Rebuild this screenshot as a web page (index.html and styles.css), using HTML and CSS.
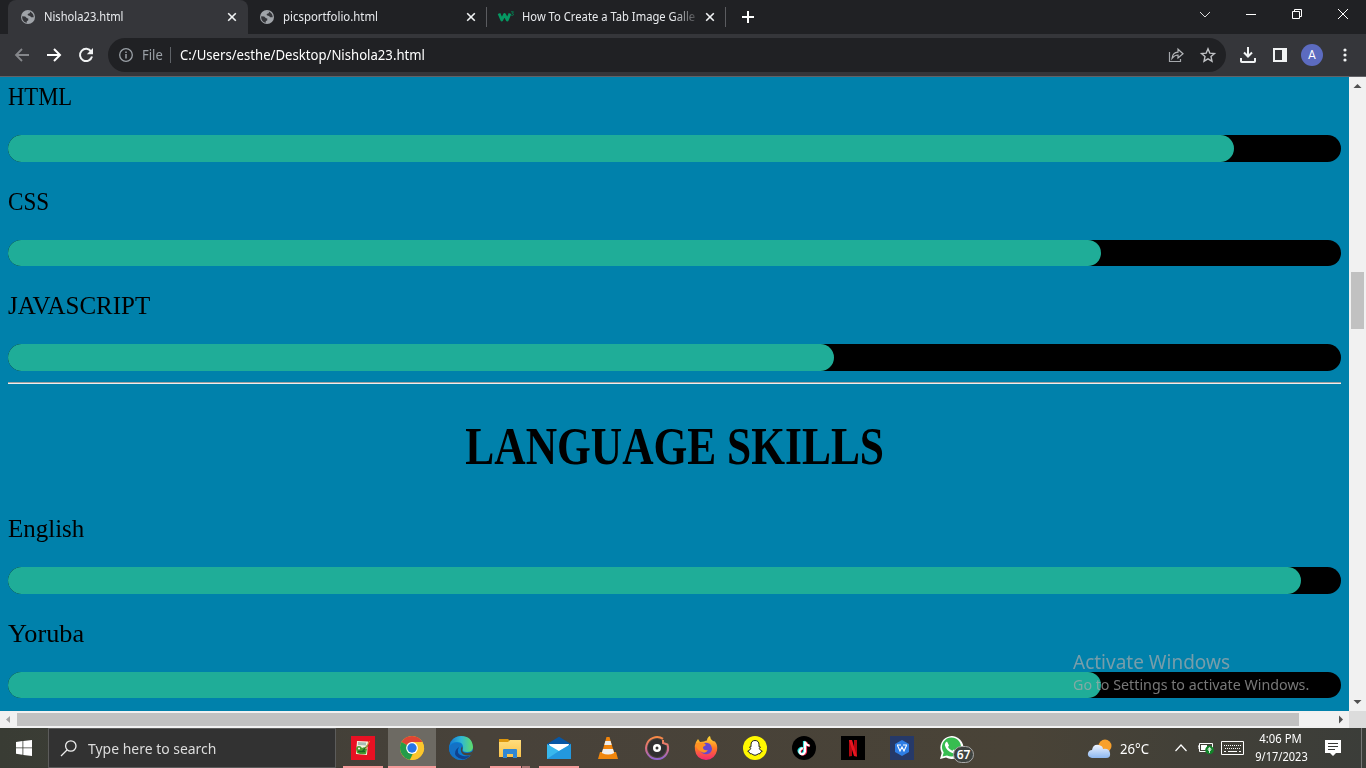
FILE: index.html
```html
<!DOCTYPE html>
<html lang="en">
<head>
<meta charset="utf-8">
<title>Nishola23.html</title>
<link rel="stylesheet" href="styles.css">
</head>
<body>
<svg width="0" height="0" class="defs">
  <defs>
    <symbol id="globe" viewBox="0 0 14 14"><circle cx="7" cy="7" r="7" fill="#a0a4a9"/><path d="M1.200 6.200 4.200 6.600 6 8.300 7.300 8.600 7.200 10.400 5.800 11v1.700C2.700 12.300.8 9.500 1.200 6.200ZM6.500 1.300 9.300 1.600 8.600 3.300 6.700 4 6.800 5.300 9 5.900 10.200 7.300 12.700 7.200c.2-3-2.700-6.400-6.200-5.900Z" fill="#35363a"/></symbol>
    <symbol id="close" viewBox="0 0 10 10"><path d="M1.200 1.200 8.800 8.800M8.800 1.200 1.200 8.800" stroke="#f1f3f4" stroke-width="1.600"/></symbol>
    <linearGradient id="edgeA" x2="1" y2="0"><stop stop-color="#1879d5"/><stop offset=".5" stop-color="#2fb8d4"/><stop offset="1" stop-color="#62dd65"/></linearGradient>
    <linearGradient id="foxA" x2="0" y2="1"><stop stop-color="#ffdf35"/><stop offset=".5" stop-color="#ff7a24"/><stop offset="1" stop-color="#f52574"/></linearGradient>
    <linearGradient id="ring" x2="0" y2="1"><stop stop-color="#f98a45"/><stop offset=".5" stop-color="#dc7082"/><stop offset="1" stop-color="#8e64cf"/></linearGradient>
    <linearGradient id="cloud" x2="0" y2="1"><stop stop-color="#eef4ff"/><stop offset="1" stop-color="#8db7ef"/></linearGradient>
    <linearGradient id="folder" x2="0" y2="1"><stop stop-color="#ffdd7d"/><stop offset="1" stop-color="#fbc34a"/></linearGradient>
  </defs>
</svg>
<div class="screen">
  <header class="tabstrip">
    <div class="tab active"><svg class="favicon"><use href="#globe"/></svg><span class="tab-title"><span class="fit t1">Nishola23.html</span></span><svg class="close"><use href="#close"/></svg></div>
    <div class="tab"><svg class="favicon"><use href="#globe"/></svg><span class="tab-title"><span class="fit t2">picsportfolio.html</span></span><svg class="close"><use href="#close"/></svg></div>
    <div class="tab third"><svg class="w3" viewBox="0 0 17 12"><path d="M1 2.500 3.800 9 6.500 3.500 9.300 9 12 2.500" fill="none" stroke="#059862" stroke-width="2.800" stroke-linejoin="round"/><path d="M13 .8h2.500L14.200 2.500q1.500 0 1.300 1.300-.7 1-2.300.4" fill="none" stroke="#05794f" stroke-width="1"/></svg><span class="tab-title fade"><span class="fit t3">How To Create a Tab Image Galle</span></span><svg class="close"><use href="#close"/></svg></div>
    <svg class="plus" viewBox="0 0 12 12"><path d="M6 0v12M0 6h12" stroke="#fff" stroke-width="2"/></svg>
    <div class="window-controls">
      <svg viewBox="0 0 12 12"><path d="m1 4 5 5 5-5" fill="none" stroke="#ddd"/></svg>
      <svg viewBox="0 0 12 12"><path d="M1 6.500h10" stroke="#fff"/></svg>
      <svg viewBox="0 0 12 12"><path d="M1.500 3.500h7v7h-7ZM3.500 3.500v-2h7v7h-2" fill="none" stroke="#fff"/></svg>
      <svg viewBox="0 0 12 12"><path d="m1 1 10 10M11 1 1 11" stroke="#fff"/></svg>
    </div>
  </header>

  <nav class="toolbar">
    <svg class="nav-icon" viewBox="0 0 16 16"><path d="M15 8H2M8 2 2 8l6 6" fill="none" stroke="#85878b" stroke-width="1.800"/></svg>
    <svg class="nav-icon" viewBox="0 0 16 16"><path d="M1 8h13M8 2l6 6-6 6" fill="none" stroke="#fff" stroke-width="2"/></svg>
    <svg class="nav-icon" viewBox="0 0 16 16"><path d="M13.200 4.600A6.100 6.100 0 1 0 14 9.500" fill="none" stroke="#f1f3f4" stroke-width="2"/><path d="M15 1v6.200H8.800Z" fill="#f1f3f4"/></svg>
    <div class="address">
      <svg class="info" viewBox="0 0 14 14"><circle cx="7" cy="7" r="6.300" fill="none" stroke="#9aa0a6" stroke-width="1.300"/><path d="M7 6v4.500M7 3.400v1.500" stroke="#9aa0a6" stroke-width="1.500"/></svg>
      <span class="scheme"><span class="fit">File</span></span>
      <span class="url"><span class="fit">C:/Users/esthe/Desktop/Nishola23.html</span></span>
      <svg class="share" viewBox="0 0 16 16"><path d="M1.500 5v9.500h11V12" fill="none" stroke="#a5a8ac" stroke-width="1.200"/><path d="M4 11.500q.5-6 6-6.300V2.200l5 4.500-5 4.200V8Q6.500 8 4 11.500Z" fill="none" stroke="#b4b6b9" stroke-width="1.200"/></svg>
      <svg class="star" viewBox="0 0 16 16"><path d="m8 1.800 1.800 4.300 4.700.4L11 9.600l1 4.600-4-2.400-4 2.400 1-4.600-3.500-3.100 4.700-.4Z" fill="none" stroke="#c0c2c5" stroke-width="1.400"/></svg>
    </div>
    <svg class="download" viewBox="0 0 16 16"><path d="M8 0v9M4 5.500l4 4 4-4M1 11v3.200q0 .8.800.8h12.400q.8 0 .8-.8V11" fill="none" stroke="#f1f3f4" stroke-width="2"/></svg>
    <svg class="panel" viewBox="0 0 14 14"><path d="M1 1h12v12H1Z" fill="none" stroke="#f1f3f4" stroke-width="2"/><path d="M9 1h4v12H9Z" fill="#f1f3f4"/></svg>
    <span class="avatar">A</span>
    <svg class="more" viewBox="0 0 4 14"><circle cx="2" cy="2" r="1.600"/><circle cx="2" cy="7" r="1.600"/><circle cx="2" cy="12" r="1.600"/></svg>
  </nav>

  <div class="viewport">
    <main class="page">
      <section class="skills first">
        <div class="skill"><p class="s-html"><span class="fit">HTML</span></p><div class="bar"><i style="width:92%"></i></div></div>
        <div class="skill"><p class="s-css"><span class="fit">CSS</span></p><div class="bar"><i style="width:82%"></i></div></div>
        <div class="skill"><p class="s-js"><span class="fit">JAVASCRIPT</span></p><div class="bar"><i style="width:62%"></i></div></div>
      </section>
      <hr>
      <h1><span class="fit">LANGUAGE SKILLS</span></h1>
      <section class="skills">
        <div class="skill"><p class="s-en"><span class="fit">English</span></p><div class="bar"><i style="width:97%"></i></div></div>
        <div class="skill"><p class="s-yo"><span class="fit">Yoruba</span></p><div class="bar"><i style="width:82%"></i></div></div>
      </section>
      <div class="watermark"><div class="wm-title"><span class="fit">Activate Windows</span></div><div class="wm-text"><span class="fit">Go to Settings to activate Windows.</span></div></div>
    </main>
    <div class="vscroll"><svg viewBox="0 0 17 17"><path d="m4.500 11 4-4 4 4Z"/></svg><b></b><svg viewBox="0 0 17 17"><path d="m4.500 6 4 4 4-4Z"/></svg></div>
  </div>
  <div class="hscroll"><svg viewBox="0 0 17 17"><path d="m10 5-4 3.500 4 3.500Z" fill="#a3a3a3"/></svg><b></b><svg viewBox="0 0 17 17"><path d="m7 4.500 4 4-4 4Z" fill="#505050"/></svg><i></i></div>

  <footer class="taskbar">
    <div class="start"><svg viewBox="0 0 16 16"><path d="m0 2 6.500-.9v6.400H0ZM7.300 1 16 0v7.500H7.300ZM0 8.300h6.500v6.400L0 13.800ZM7.300 8.300H16V16l-8.700-1.100Z" fill="#fff"/></svg></div>
    <div class="search"><svg viewBox="0 0 17 17"><circle cx="10.800" cy="6" r="5.200" fill="none" stroke="#eee" stroke-width="1.300"/><path d="M7 10 1 16" stroke="#eee" stroke-width="1.300"/></svg><span><span class="fit">Type here to search</span></span></div>
    <div class="apps">
      <div class="app open"><svg viewBox="0 0 24 24"><path fill="#e81123" d="M0 0h24v24H0Z"/><path fill="#f4f4df" d="m6 5 11 .5L16 19l-11-1Z"/><path fill="#a9bcb4" d="m7 6 8 .5v3L7 9Z"/><path d="M5 13q0-3 3-3 2 0 3 2 3-2 5 1l-1 5q-5 1-9-1Z" fill="#4a9a2f"/><circle cx="8" cy="12.500" r="1" fill="#fff"/><path d="M7 15.500h7M11 16l6-7" stroke="#1b6724" stroke-width="1.300"/><path d="m14.500 13 4-8" stroke="#e39d3c"/></svg></div>
      <div class="app open current"><svg viewBox="0 0 24 24"><circle cx="12" cy="12" r="12" fill="#fbc116"/><path d="M12 12 1.600 6A12 12 0 0 1 22.400 6Z" fill="#df4435"/><path d="M1.600 6 12 12l1 5-3 6.800A12 12 0 0 1 1.600 6" fill="#249b4a"/><path d="M12 6h10.400A12 12 0 0 1 10 23.800L17 14Z" fill="#fbc62d"/><circle cx="12" cy="12" r="5.900" fill="#fff"/><circle cx="12" cy="12" r="4.700" fill="#2675e8"/></svg></div>
      <div class="app"><svg viewBox="0 0 24 24"><circle cx="12" cy="12" r="12" fill="#087bd3"/><path d="M.5 10Q3 0 12 0q11 0 12 11 0 5-6 5-5 0-4-3 1-7-6-7-5 0-7.500 4" fill="url(#edgeA)"/><path d="M0 12Q2 7 8 7q4 0 5 3-4 0-4 4 1 8 12 6-8 7-15 2-6-3-6-10" fill="#1471c5"/><path d="M10 11q-4 7 4 9 5 1 8-1-8 8-15 1-3-5 3-9" fill="#10428d"/><path d="M13 10q1 2 .2 4 0 3 5 3 3 0 6-2l-2 4q-4 1-8-.5-4-3-1.200-8.500" fill="#48443b"/></svg></div>
      <div class="app open grouped"><svg viewBox="0 0 24 24"><path d="M1 3h9l2 2h10v16H1Z" fill="#dd970d"/><path d="M1 6h9l2-2h11v17H1Z" fill="url(#folder)"/><path d="M5 14q0-1 1-1h12q1 0 1 1v8h-4v-4H9v4H5Z" fill="#3187d2"/></svg></div>
      <div class="app open"><svg viewBox="0 0 24 24"><path d="M0 8 12 .8 24 8v3H0Z" fill="#0757a5"/><path d="M2 8h20l-2 8H4Z" fill="#fff"/><path d="m0 8 12 7 12-7v15H0Z" fill="#38b8ed"/><path d="m24 8-12 7L0 23h24Z" fill="#137ed1" opacity=".55"/></svg></div>
      <div class="app"><svg viewBox="0 0 24 24"><path d="M4 16h16l2 7H2Z" fill="#ef860d"/><path d="M10.500 1h3l5 17q-6.500 4-13 0Z" fill="#f1840b"/><path d="M9.300 5h5.300l1.100 4H8.300ZM7 13h10l1.200 4q-6 3-12.400 0Z" fill="#eee"/></svg></div>
      <div class="app"><svg viewBox="0 0 24 24"><circle cx="12" cy="12" r="9" fill="#302f31"/><path d="M18 2.800A11 11 0 1 0 22.500 8.500L18 7V4" fill="none" stroke="url(#ring)" stroke-width="2"/><circle cx="12" cy="12" r="4" fill="#fff"/><circle cx="12" cy="12" r="1.500" fill="#333"/></svg></div>
      <div class="app"><svg viewBox="0 0 24 24"><path d="M2 6 4 3l2 3 4-.5q2-1 3-1 0-3 3-4.500 0 3 3 5l2 .5q3 4 2 9-2 9-11 9.500Q2 23 1 14 0 10 2 6" fill="url(#foxA)"/><path d="M7 9q4-4 9-1 4 5 0 9-5 3-9-1-2-4 0-7" fill="#6847ce"/><path d="M2 7q4-1 8 0l2 2-3 2q0 4 5 3-3 5-8 1-4-2-4-8" fill="#ff9122"/></svg></div>
      <div class="app"><svg viewBox="0 0 24 24"><circle cx="12" cy="12" r="12" fill="#fff800"/><path d="M12 4.500q4 0 4 4.300v2l1.500.2-1.200 1.600q1 2 3 2.700l-1.700 1-.6 1.400q-2-.3-3 1-2 1.200-4 0-1-1.300-3-1l-.6-1.400-1.700-1q2-.7 3-2.700L6.500 11l1.500-.2v-2q0-4.300 4-4.300" fill="#fff" stroke="#222" stroke-width="1"/></svg></div>
      <div class="app"><svg viewBox="0 0 24 24"><circle cx="12" cy="12" r="12" fill="#000"/><g fill="none" stroke-width="2.200"><path d="M12 5v10q-1 3.500-4 2.500-3-3 0-5 1-1 2-.5M12 5q1 4 5 4" stroke="#25e3df"/><path d="M14 6v10q-1 3-4 2.500-3-2-.5-5 1-1 2-.5M14 6q1 3.500 4 4" stroke="#f62b56"/><path d="M13 5.500v10q-1 3.500-4 2.500-3-2.500 0-5 1-1 2-.5M13 5.500q1 4 4.500 4" stroke="#fff"/></g></svg></div>
      <div class="app"><svg viewBox="0 0 24 24"><path d="M0 0h24v24H0Z"/><path d="M8 4h3v16l-3 .4ZM13 4h3v16.400l-3-.4Z" fill="#b20710"/><path d="M8 4h3l5 16.400-3-.4Z" fill="#e71520"/></svg></div>
      <div class="app"><svg viewBox="0 0 24 24"><path d="M0 0h24v24H0Z" fill="#263968"/><path d="m12 4 7 4v8l-7 4-7-4V8Z" fill="#2d7de5"/><path d="M7 9h4M13 9h4M7.500 9.500 10 15l2-4 2 4 2.500-5.500" fill="none" stroke="#fff" stroke-width="1.100"/></svg></div>
      <div class="app"><svg viewBox="0 0 24 24"><path d="M1 23 2.700 17A11.500 11.500 0 1 1 7 21.500Z" fill="#fff"/><path d="m3.500 20.500 1.200-4A9.500 9.500 0 1 1 8 19.400Z" fill="#37bd50"/><path d="M8 5.500 10 9.500 9 11q1.500 3 4.300 3.700l1.400-1.200 3.600 1.700Q17 18 14 17.300 7.500 15.500 5.800 9 6 6 8 5.500" fill="#fff"/></svg><span class="badge">67</span></div>
    </div>
    <div class="weather"><svg viewBox="0 0 25 21"><circle cx="18" cy="8" r="6.500" fill="#f8a02b"/><path d="M5 20q-5-1-4-5 1-3 4-3 1-6 7-5 4 1 4 4 6-1 7 4 1 5-4 5Z" fill="url(#cloud)"/></svg><span><span class="fit">26°C</span></span></div>
    <svg class="chevron" viewBox="0 0 12 8"><path d="m.5 7 5.500-6 5.500 6" fill="none" stroke="#fff" stroke-width="1.200"/></svg>
    <svg class="battery" viewBox="0 0 16 12"><path d="M1.500 1.500h13v8h-13ZM0 4h1v3" fill="none" stroke="#fff"/><path d="M3 3h6v5H3Z" fill="#fff"/><circle cx="11.500" cy="8" r="4.300" fill="#128429"/><path d="M11.500 5.500v5.500M10 8q0-2 1.500-2.200Q13 6 13 8q-1.500 1.500-3 0" stroke="#fff" stroke-width=".8" fill="none"/></svg>
    <svg class="keyboard" viewBox="0 0 23 14"><path d="M.5.500h22v13H.5Z" fill="none" stroke="#fff"/><path d="M3 4.500h17M4 7.500h16" stroke="#fff" stroke-dasharray="1 1"/><path d="M3 10.500h2M7 10.500h9M18 10.500h2" stroke="#fff"/></svg>
    <div class="clock"><span class="time"><span class="fit">4:06 PM</span></span><span class="date"><span class="fit">9/17/2023</span></span></div>
    <svg class="notify" viewBox="0 0 16 16"><path d="M0 0h16v13h-5l-3 3-3-3H0Z" fill="#fff"/><path d="M3 3.500h10M3 6.500h10M3 9.500h7" stroke="#383936"/></svg>
    <i class="peek"></i>
  </footer>
</div>
</body>
</html>
```
FILE: styles.css
```css
* { box-sizing: border-box; }
body { margin: 0; overflow: hidden; font-family: "Noto Sans", "Open Sans", sans-serif; }
svg { display: block; flex: none; overflow: visible; }
.defs { position: absolute; }
.screen { width: 1366px; height: 768px; display: flex; flex-direction: column; }
.fit { display: inline-block; white-space: nowrap; transform-origin: 0 50%; }

/* Tab strip */
.tabstrip { height: 34px; flex: none; background: #202124; display: flex; align-items: center; padding-left: 8px; color: #e8eaed; font-size: 12px; }
.tab { width: 240px; height: 34px; display: flex; align-items: center; padding: 0 11px 0 12px; }
.tab.active { background: #35363a; border-radius: 8px 8px 0 0; }
.favicon { width: 14px; height: 14px; margin-left: 1px; }
.tab-title { flex: 1; min-width: 0; margin-left: 9px; line-height: 20px; white-space: nowrap; }
.tab:nth-child(2) { width: 239px; padding-left: 11px; }
.close { width: 10px; height: 10px; }
.tab:nth-child(2), .tab.third { background: linear-gradient(#5b5c60, #5b5c60) right 7px / 1px 20px no-repeat; }
.tab.third { width: 239px; padding-left: 11px; }
.w3 { width: 17px; height: 12px; }
.third .tab-title { margin-left: 7px; margin-right: 8px; }
.fade { mask-image: linear-gradient(90deg, #000 86%, rgba(0, 0, 0, .15)); }
.t1 { transform: scaleX(.93); }
.t2 { transform: scaleX(.95); }
.t3 { transform: scaleX(.935); }
.plus { width: 12px; height: 12px; margin-left: 16px; }
.window-controls { margin-left: auto; display: flex; gap: 34px; padding: 0 17px 6px 0; }
.window-controls svg { width: 12px; height: 12px; }

/* Toolbar */
.toolbar { height: 43px; flex: none; background: #35363a; border-bottom: 1px solid #626267; display: flex; align-items: center; padding: 0 19px 0 14px; }
.nav-icon { width: 16px; height: 16px; margin-right: 16px; }
.address { width: 1118px; height: 34px; margin-left: -2px; border-radius: 17px; background: #202124; display: flex; align-items: center; padding: 0 10px 0 11px; font-size: 14px; }
.info { width: 14px; height: 14px; }
.scheme { width: 29px; margin-left: 9px; color: #9aa0a6; line-height: 18px; padding-bottom: 1px; }
.scheme .fit { transform: scaleX(.93); }
.url { border-left: 1px solid #5f6368; margin-left: -1px; padding-left: 9px; flex: 1; color: #fff; line-height: 16px; }
.url .fit { transform: scaleX(.938); }
.share, .star { width: 16px; height: 16px; }
.star { margin-left: 16px; }
.download { width: 16px; height: 16px; margin-left: 14px; }
.panel { width: 14px; height: 14px; margin-left: 17px; }
.avatar { width: 22px; height: 22px; flex: none; margin-left: 14px; border-radius: 50%; background: #5c6bc0; color: #fff; font: 12px/22px Roboto, sans-serif; text-align: center; }
.more { width: 4px; height: 14px; margin-left: auto; fill: #f1f3f4; }

/* Document */
.viewport { height: 634px; flex: none; display: flex; overflow: hidden; }
.page { width: 1349px; height: 634px; overflow: hidden; position: relative; background: #0081ab; padding: 0 8px; font-family: "Liberation Serif", serif; color: #000; }
.skills.first { margin-top: -20px; }
.skill { height: 104.67px; }
.skill p { margin: 0; height: 78px; line-height: 79px; font-size: 26px; }
.bar { height: 26.67px; border-radius: 14px; background: #000; }
.bar i { display: block; height: 100%; border-radius: 14px; background: #1fad98; }
.s-html .fit { transform: scaleX(.87); }
.s-css .fit { transform: scaleX(.89); }
.s-js .fit { transform: scaleX(.962); }
.s-en .fit { transform: scaleX(.96); }
.s-yo .fit { transform: scaleX(1.01); }
hr { height: 2px; margin: 11px 0 0; border: 0; background: linear-gradient(#a0a0a0 50%, #eee 50%); }
h1 { height: 105px; margin: 0; padding: 20px 0 0 1px; font-size: 52px; font-weight: 700; line-height: 86px; text-align: center; }
h1 .fit { transform: scaleX(.835); transform-origin: 50% 50%; }
.watermark { position: absolute; left: 1073px; top: 573px; font-family: "Noto Sans", sans-serif; color: rgba(170, 170, 170, .7); }
.wm-title { font-size: 20px; line-height: 24px; }
.wm-text { font-size: 15px; line-height: 20px; }
.wm-title .fit { transform: scaleX(.95); }
.wm-text .fit { transform: scaleX(.951); }

/* Scrollbars */
.vscroll { width: 17px; background: #f1f1f1; display: flex; flex-direction: column; fill: #505050; }
.vscroll svg { width: 17px; height: 17px; }
.vscroll b { width: 13px; height: 57px; margin: 178px 2px auto; background: #c1c1c1; }
.hscroll { height: 17px; flex: none; display: flex; align-items: center; background: #f1f1f1; }
.hscroll svg { width: 17px; height: 17px; }
.hscroll b { width: 1282px; height: 13px; background: #c1c1c1; margin-right: 33px; }
.hscroll i { width: 17px; height: 17px; background: #dcdcdc; }

/* Taskbar */
.taskbar { height: 40px; flex: none; display: flex; align-items: center; background: linear-gradient(90deg, #393c34, #48423a 35%, #494337 75%, #3b3d39); color: #fff; }
.start { width: 48px; padding-left: 16px; }
.start svg { width: 16px; height: 16px; }
.search { width: 288px; height: 40px; border: 1px solid #5c5c5b; background: #323232; display: flex; align-items: center; padding-left: 11px; color: #dcdcdc; font-size: 15px; }
.search svg { width: 17px; height: 17px; margin-right: 11px; }
.search .fit { transform: scaleX(.93); }
.apps { display: flex; gap: 1px; margin-left: 3px; }
.app { width: 48px; height: 40px; display: flex; align-items: center; justify-content: center; position: relative; }
.app svg { width: 24px; height: 24px; }
.app.open { background: linear-gradient(#f69b9b, #f69b9b) center bottom / 40px 2px no-repeat; }
.app.current { background: linear-gradient(#f69b9b, #f69b9b) center bottom / 48px 2px no-repeat #6d6a63; }
.app.grouped { background: linear-gradient(90deg, #f69b9b 31px, #493c38 31px, #493c38 32px, #ae7674 32px) center bottom / 40px 2px no-repeat; }
.badge { position: absolute; left: 26px; top: 18px; width: 21px; height: 17px; border: 1px solid #aaa; border-radius: 9px; background: #3e4340; font-size: 12px; font-weight: 600; line-height: 15px; text-align: center; }
.app:nth-child(n+12) { left: 0; }
.weather { width: 88px; margin-left: 112px; display: flex; align-items: center; font-size: 14px; }
.weather svg { width: 25px; height: 21px; margin-right: 8px; }
.weather .fit { transform: scaleX(.94); }
.chevron { width: 12px; height: 8px; }
.battery { width: 16px; height: 12px; margin-left: 11px; }
.keyboard { width: 23px; height: 14px; margin-left: 7px; }
.clock { width: 54px; margin-left: 10px; display: flex; flex-direction: column; align-items: center; font-size: 12px; line-height: 18px; white-space: nowrap; }
.clock .fit { transform-origin: 50% 50%; }
.time .fit { transform: scaleX(.94); }
.date .fit { transform: scaleX(.92); }
.notify { width: 16px; height: 16px; margin-left: 17px; }
.peek { width: 1px; height: 40px; background: #777; margin-left: 20px; }
```
